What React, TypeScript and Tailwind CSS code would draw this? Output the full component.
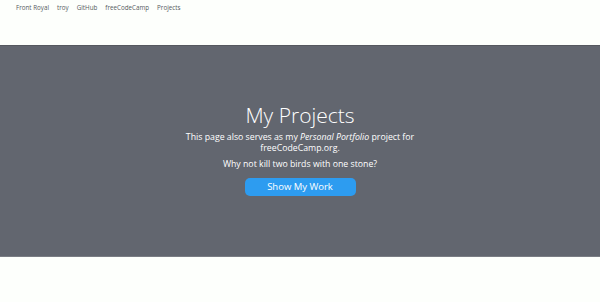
const links = ['Front Royal', 'troy', 'GitHub', 'freeCodeCamp', 'Projects']

export default function App() {
  return (
    <div className="min-h-[302px] bg-[#fdfffc] font-['Open_Sans',sans-serif]">
      {/* Nav */}
      <nav className="flex h-[45px] items-start gap-[8px] px-[16px] pt-[3px]">
        {links.map((l) => (
          <a key={l} href="#" className="text-[6.25px] leading-[9px] text-[#555a60]">
            {l}
          </a>
        ))}
      </nav>

      {/* Hero */}
      <section className="flex h-[212px] flex-col items-center border-t border-b border-t-[#55585f] border-b-[#7a7d84] bg-[#62666f] pt-[56px] text-center text-white">
        <h1 className="text-[21px] font-light leading-[26px]">My Projects</h1>
        <p className="mt-[4px] max-w-[236px] text-[8.75px] leading-[11px]">
          This page also serves as my <em>Personal Portfolio</em> project for freeCodeCamp.org.
        </p>
        <p className="mt-[5px] text-[8.75px] leading-[11px]">Why not kill two birds with one stone?</p>
        <button className="mt-[8px] h-[18px] w-[111px] rounded-[5px] bg-[#2d9cf0] text-[9.5px] text-white">
          Show My Work
        </button>
      </section>
    </div>
  )
}
